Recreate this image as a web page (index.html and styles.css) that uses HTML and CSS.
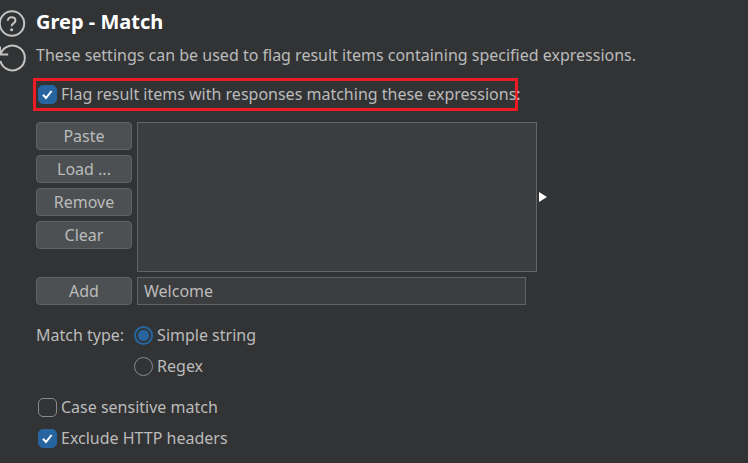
FILE: index.html
```html
<!DOCTYPE html>
<html lang="en">
<head>
    <meta charset="UTF-8">
    <meta name="viewport" content="width=device-width, initial-scale=1.0">
    <title>Grep - Match</title>
    <link rel="stylesheet" href="styles.css">
</head>
<body>
    <section class="panel">
        <div class="panel-tools">
            <button type="button" class="tool" aria-label="Help">
                <svg viewBox="0 0 26 28" width="26" height="28">
                    <circle cx="12" cy="13.5" r="12.2"/>
                    <path d="M7.8 10.8c0-2.2 1.6-3.6 3.8-3.6s3.8 1.3 3.8 3.2c0 3-3.8 2.9-3.8 5.8"/>
                    <circle class="dot" cx="11.6" cy="19.8" r="1.5"/>
                </svg>
            </button>
            <button type="button" class="tool" aria-label="Restore defaults">
                <svg viewBox="0 0 26 28" width="26" height="28">
                    <path d="M.8 9.6A12.4 12.4 0 1 1 .4 17"/>
                    <path d="M0 2.5v8H8.2"/>
                </svg>
            </button>
        </div>

        <form class="panel-body">
            <h1>Grep - Match</h1>
            <p class="description">These settings can be used to flag result items containing specified expressions.</p>

            <div class="flag-row">
                <label class="option"><input type="checkbox" checked>Flag result items with responses matching these expressions:</label>
            </div>

            <div class="editor">
                <div class="actions">
                    <button type="button" class="btn">Paste</button>
                    <button type="button" class="btn">Load ...</button>
                    <button type="button" class="btn">Remove</button>
                    <button type="button" class="btn">Clear</button>
                </div>
                <select class="list" size="5" aria-label="Expressions"></select>
                <svg class="arrow" viewBox="0 0 8 10" width="8" height="10"><path d="M0 0l8 5-8 5z"/></svg>
            </div>

            <div class="editor">
                <button type="button" class="btn">Add</button>
                <input type="text" class="new-item" value="Welcome" aria-label="New expression">
            </div>

            <div class="match-type" role="radiogroup" aria-labelledby="match-label">
                <span id="match-label">Match type:</span>
                <div class="options">
                    <label class="option"><input type="radio" name="match" checked>Simple string</label>
                    <label class="option"><input type="radio" name="match">Regex</label>
                </div>
            </div>

            <div class="options options-inset">
                <label class="option"><input type="checkbox">Case sensitive match</label>
                <label class="option"><input type="checkbox" checked>Exclude HTTP headers</label>
            </div>
        </form>
    </section>
</body>
</html>
```
FILE: styles.css
```css
:root {
    --color-bg: #313335;
    --color-field: #3c3d3f;
    --color-button: #4c5052;
    --color-border: #616365;
    --color-text: #bbbbbb;
    --color-accent: #2665a0;
    --color-mark: #ed1c24;
    --font-default: "Noto Sans", "Open Sans", sans-serif;
}

* {
    box-sizing: border-box;
}

body {
    margin: 0;
    background-color: var(--color-bg);
    color: var(--color-text);
    font-family: var(--font-default);
    font-size: 16px;
    line-height: 24px;
}

button, input, select {
    margin: 0;
    font: inherit;
    color: inherit;
}

.panel {
    display: flex;
    gap: 10px;
    padding: 10px 0 12px;
}

/* Help and reset icons */
.panel-tools {
    display: flex;
    flex-direction: column;
    gap: 6px;
    flex: none;
    width: 26px;
}

.tool {
    display: block;
    height: 28px;
    padding: 0;
    border: 0;
    background: none;
}

.tool svg {
    display: block;
    fill: none;
    stroke: #c4c4c4;
    stroke-width: 2;
}

.tool .dot {
    fill: #c4c4c4;
    stroke: none;
}

.panel-body {
    flex: 1;
    min-width: 0;
}

h1 {
    margin: 0;
    color: #fff;
    font-size: 20px;
    font-weight: bold;
    line-height: 24px;
}

.description {
    margin: 9px 0 0;
}

/* Highlighted option */
.flag-row {
    width: fit-content;
    max-width: 485px;
    height: 33px;
    margin: 11px 0 11px -3px;
    padding: 1px 0 1px 2px;
    border: 3px solid var(--color-mark);
    white-space: nowrap;
}

.option {
    display: flex;
    align-items: center;
    gap: 4px;
}

.option input {
    appearance: none;
    flex: none;
    width: 19px;
    height: 19px;
    border: 1px solid #8a8a8a;
    border-radius: 5px;
}

.option input[type="checkbox"]:checked {
    border-color: var(--color-accent);
    background: var(--color-accent) url("data:image/svg+xml,%3Csvg xmlns='http://www.w3.org/2000/svg' viewBox='0 0 17 17'%3E%3Cpath d='M4 8.8l3 3.2 5.6-7' fill='none' stroke='white' stroke-width='2'/%3E%3C/svg%3E") center / 17px 17px;
}

.option input[type="radio"] {
    border-radius: 50%;
}

.option input[type="radio"]:checked {
    border: 2px solid var(--color-accent);
    background: radial-gradient(circle, var(--color-accent) 5px, transparent 6px);
}

/* Expression list */
.editor {
    display: flex;
    gap: 5px;
    margin-bottom: 5px;
}

.actions {
    display: flex;
    flex-direction: column;
    gap: 5px;
}

.btn {
    flex: none;
    width: 96px;
    height: 28px;
    padding: 0;
    border: 1px solid var(--color-border);
    border-radius: 4px;
    background-color: var(--color-button);
    line-height: 24px;
}

.list,
.new-item {
    flex: 1;
    min-width: 0;
    max-width: 400px;
    border: 1px solid var(--color-border);
    border-radius: 0;
    background-color: var(--color-field);
    outline: 0;
}

.list {
    height: 150px;
}

.new-item {
    max-width: 389px;
    height: 28px;
    padding: 0 6px;
}

.arrow {
    align-self: center;
    margin-left: -3px;
    fill: #fff;
}

/* Match settings */
.match-type {
    display: flex;
    gap: 10px;
    margin-top: 18px;
}

.options {
    display: flex;
    flex-direction: column;
    align-items: flex-start;
    gap: 7px;
}

.options-inset {
    margin-top: 17px;
    padding-left: 2px;
}
```
